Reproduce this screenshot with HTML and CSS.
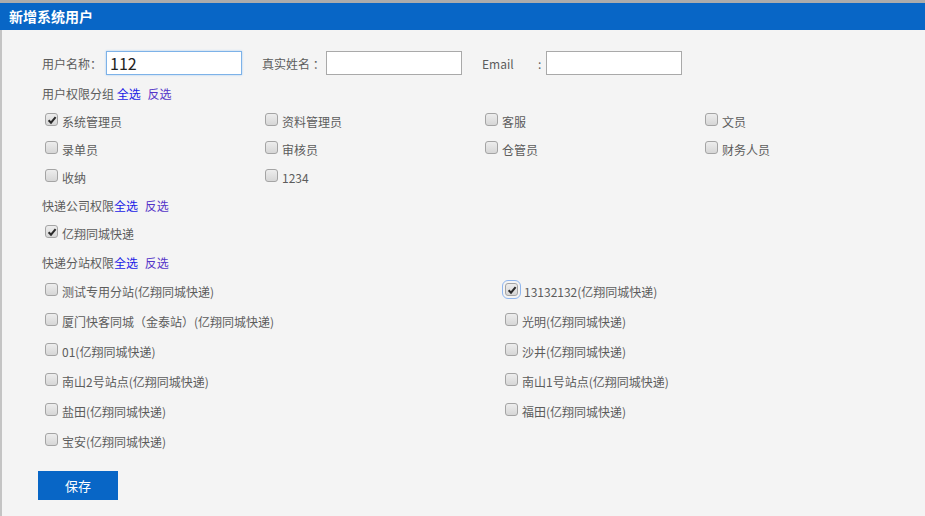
FILE: index.html
```html
<!DOCTYPE html>
<html lang="zh-CN">
<head>
<meta charset="utf-8">
<title>新增系统用户</title>
<link rel="stylesheet" href="styles.css">
</head>
<body>
<div class="page">
  <div class="header">新增系统用户</div>
  <div class="form">
    <div class="fields">
      <div class="field">
        <span class="flabel">用户名称：</span>
        <span class="input focused">112</span>
      </div>
      <div class="field">
        <span class="flabel">真实姓名 ：</span>
        <span class="input"></span>
      </div>
      <div class="field">
        <span class="flabel"><span class="em">Email</span><span class="colon">:</span></span>
        <span class="input"></span>
      </div>
    </div>

    <div class="heading">用户权限分组 <a class="all">全选</a> <a class="inv">反选</a></div>
    <div class="grid4">
      <div class="item"><span class="cb checked"><svg viewBox="0 0 12 12"><path d="M2.6 6.2 L5 8.7 L9.6 3.2"/></svg></span>系统管理员</div>
      <div class="item"><span class="cb"></span>资料管理员</div>
      <div class="item"><span class="cb"></span>客服</div>
      <div class="item"><span class="cb"></span>文员</div>
      <div class="item"><span class="cb"></span>录单员</div>
      <div class="item"><span class="cb"></span>审核员</div>
      <div class="item"><span class="cb"></span>仓管员</div>
      <div class="item"><span class="cb"></span>财务人员</div>
      <div class="item"><span class="cb"></span>收纳</div>
      <div class="item"><span class="cb"></span>1234</div>
    </div>

    <div class="heading h2">快递公司权限<a class="all">全选</a> <a class="inv">反选</a></div>
    <div class="grid4">
      <div class="item"><span class="cb checked"><svg viewBox="0 0 12 12"><path d="M2.6 6.2 L5 8.7 L9.6 3.2"/></svg></span>亿翔同城快递</div>
    </div>

    <div class="heading h3">快递分站权限<a class="all">全选</a> <a class="inv">反选</a></div>
    <div class="grid2">
      <div class="item"><span class="cb"></span>测试专用分站(亿翔同城快递)</div>
      <div class="item"><span class="cb checked focus"><svg viewBox="0 0 12 12"><path d="M2.6 6.2 L5 8.7 L9.6 3.2"/></svg></span>13132132(亿翔同城快递)</div>
      <div class="item"><span class="cb"></span>厦门快客同城（金泰站）(亿翔同城快递)</div>
      <div class="item"><span class="cb"></span>光明(亿翔同城快递)</div>
      <div class="item"><span class="cb"></span>01(亿翔同城快递)</div>
      <div class="item"><span class="cb"></span>沙井(亿翔同城快递)</div>
      <div class="item"><span class="cb"></span>南山2号站点(亿翔同城快递)</div>
      <div class="item"><span class="cb"></span>南山1号站点(亿翔同城快递)</div>
      <div class="item"><span class="cb"></span>盐田(亿翔同城快递)</div>
      <div class="item"><span class="cb"></span>福田(亿翔同城快递)</div>
      <div class="item"><span class="cb"></span>宝安(亿翔同城快递)</div>
    </div>

    <div class="actions"><button class="save" type="button">保存</button></div>
  </div>
</div>
</body>
</html>
```
FILE: styles.css
```css
html, body {
  margin: 0;
  padding: 0;
  background: #f4f4f4;
}
body {
  font-family: "Noto Sans CJK SC", "Microsoft YaHei", sans-serif;
  font-size: 12px;
  color: #5c5c5c;
}
.page {
  width: 925px;
  height: 516px;
  box-sizing: border-box;
  border-top: 3px solid #acacac;
  overflow: hidden;
  background: linear-gradient(to right, #c4c4c4 0, #c4c4c4 2px, #f4f4f4 2px);
}
.header {
  height: 27px;
  line-height: 27px;
  background: #0866c6;
  color: #fff;
  font-weight: bold;
  font-size: 14px;
  padding-left: 9px;
}
.form {
  padding: 21px 0 0 38px;
}
.fields {
  display: flex;
  height: 24px;
  padding-left: 4px;
}
.field {
  display: flex;
  align-items: center;
  margin-right: 20px;
}
.flabel {
  width: 64px;
  display: flex;
  align-items: center;
  white-space: pre;
}
.em { width: 56px; }
.input {
  width: 136px;
  height: 24px;
  box-sizing: border-box;
  border: 1px solid #a9a9a9;
  background: #fff;
  font-size: 16px;
  line-height: 22px;
  color: #222;
  padding-left: 3px;
}
.input.focused {
  border-color: #7db2e8;
  box-shadow: 0 0 2px #a9cdf3;
}
.heading {
  height: 20px;
  line-height: 20px;
  margin-top: 9px;
  padding-left: 4px;
}
.heading.h2 { margin-top: 5px; }
.heading.h3 { margin-top: 6px; }
.heading a { cursor: pointer; }
.all { color: #1a1ae6; }
.inv { color: #5534c8; margin-left: 4px; }
.grid4 {
  display: grid;
  grid-template-columns: repeat(4, 220px);
  grid-auto-rows: 28px;
  margin-top: 3px;
  padding-left: 7px;
}
.grid2 {
  display: grid;
  grid-template-columns: repeat(2, 460px);
  grid-auto-rows: 30px;
  margin-top: 3px;
  padding-left: 7px;
}
.item {
  display: flex;
  align-items: center;
  white-space: nowrap;
}
.cb {
  width: 13px;
  height: 13px;
  box-sizing: border-box;
  border: 1px solid #a4a4a4;
  border-radius: 3px;
  background: linear-gradient(#ededed, #d6d6d6);
  margin-right: 4px;
  margin-top: -3px;
  position: relative;
  flex: none;
}
.cb svg {
  position: absolute;
  left: -0.5px;
  top: -0.5px;
  width: 12px;
  height: 12px;
}
.cb svg path {
  fill: none;
  stroke: #2a2a2a;
  stroke-width: 2;
}
.cb.focus {
  outline: 1px solid #8fb6ee;
  outline-offset: 2px;
  margin-right: 6px;
}
.actions {
  margin-top: 15px;
}
.save {
  width: 80px;
  height: 29px;
  border: none;
  background: #0866c6;
  color: #fff;
  font-family: "Noto Sans CJK SC", sans-serif;
  font-size: 13px;
  padding: 0;
}
```
